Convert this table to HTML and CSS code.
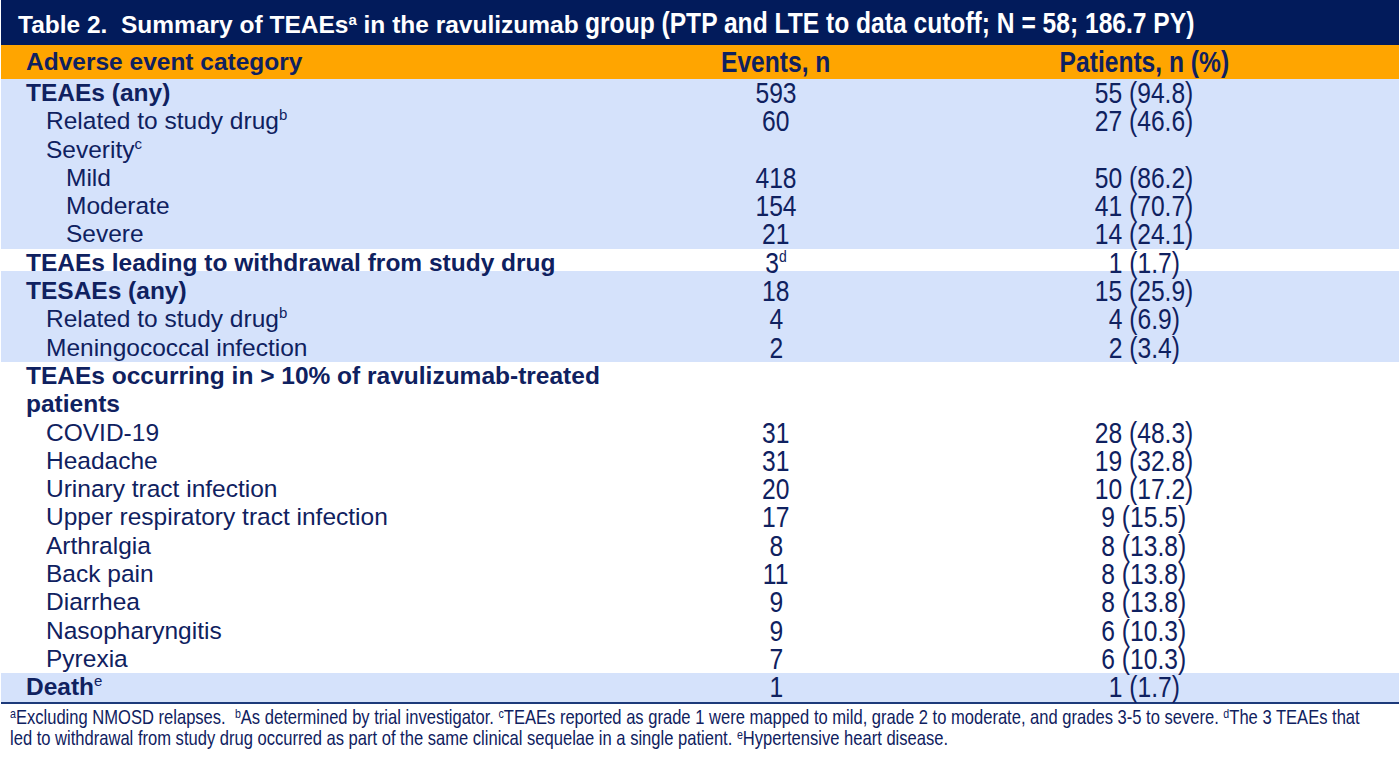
FILE: index.html
```html
<!DOCTYPE html>
<html>
<head>
<meta charset="utf-8">
<link rel="stylesheet" href="styles.css">
</head>
<body>
<div class="page">
  <div class="title">Table 2.&nbsp; Summary of TEAEs<sup>a</sup> in the ravulizumab <span class="tn">group (PTP and LTE to data cutoff; N = 58; 186.7 PY)</span></div>
  <div class="table">
    <div class="row head">
      <div class="label">Adverse event category</div>
      <div class="num"><span class="n">Events, n</span></div>
      <div class="num"><span class="n">Patients, n (%)</span></div>
    </div>
    <div class="row shade">
      <div class="label b">TEAEs (any)</div>
      <div class="num"><span class="n">593</span></div>
      <div class="num"><span class="n">55 (94.8)</span></div>
    </div>
    <div class="row shade">
      <div class="label l1">Related to study drug<sup>b</sup></div>
      <div class="num"><span class="n">60</span></div>
      <div class="num"><span class="n">27 (46.6)</span></div>
    </div>
    <div class="row shade">
      <div class="label l1">Severity<sup>c</sup></div>
      <div class="num"></div>
      <div class="num"></div>
    </div>
    <div class="row shade">
      <div class="label l2">Mild</div>
      <div class="num"><span class="n">418</span></div>
      <div class="num"><span class="n">50 (86.2)</span></div>
    </div>
    <div class="row shade">
      <div class="label l2">Moderate</div>
      <div class="num"><span class="n">154</span></div>
      <div class="num"><span class="n">41 (70.7)</span></div>
    </div>
    <div class="row shade">
      <div class="label l2">Severe</div>
      <div class="num"><span class="n">21</span></div>
      <div class="num"><span class="n">14 (24.1)</span></div>
    </div>
    <div class="row split">
      <div class="label b">TEAEs leading to withdrawal from study drug</div>
      <div class="num"><span class="n">3<sup>d</sup></span></div>
      <div class="num"><span class="n">1 (1.7)</span></div>
    </div>
    <div class="row shade">
      <div class="label b">TESAEs (any)</div>
      <div class="num"><span class="n">18</span></div>
      <div class="num"><span class="n">15 (25.9)</span></div>
    </div>
    <div class="row shade">
      <div class="label l1">Related to study drug<sup>b</sup></div>
      <div class="num"><span class="n">4</span></div>
      <div class="num"><span class="n">4 (6.9)</span></div>
    </div>
    <div class="row shade">
      <div class="label l1">Meningococcal infection</div>
      <div class="num"><span class="n">2</span></div>
      <div class="num"><span class="n">2 (3.4)</span></div>
    </div>
    <div class="row">
      <div class="label b">TEAEs occurring in &gt; 10% of ravulizumab-treated patients</div>
      <div class="num"></div>
      <div class="num"></div>
    </div>
    <div class="row">
      <div class="label l1">COVID-19</div>
      <div class="num"><span class="n">31</span></div>
      <div class="num"><span class="n">28 (48.3)</span></div>
    </div>
    <div class="row">
      <div class="label l1">Headache</div>
      <div class="num"><span class="n">31</span></div>
      <div class="num"><span class="n">19 (32.8)</span></div>
    </div>
    <div class="row">
      <div class="label l1">Urinary tract infection</div>
      <div class="num"><span class="n">20</span></div>
      <div class="num"><span class="n">10 (17.2)</span></div>
    </div>
    <div class="row">
      <div class="label l1">Upper respiratory tract infection</div>
      <div class="num"><span class="n">17</span></div>
      <div class="num"><span class="n">9 (15.5)</span></div>
    </div>
    <div class="row">
      <div class="label l1">Arthralgia</div>
      <div class="num"><span class="n">8</span></div>
      <div class="num"><span class="n">8 (13.8)</span></div>
    </div>
    <div class="row">
      <div class="label l1">Back pain</div>
      <div class="num"><span class="n">11</span></div>
      <div class="num"><span class="n">8 (13.8)</span></div>
    </div>
    <div class="row">
      <div class="label l1">Diarrhea</div>
      <div class="num"><span class="n">9</span></div>
      <div class="num"><span class="n">8 (13.8)</span></div>
    </div>
    <div class="row">
      <div class="label l1">Nasopharyngitis</div>
      <div class="num"><span class="n">9</span></div>
      <div class="num"><span class="n">6 (10.3)</span></div>
    </div>
    <div class="row">
      <div class="label l1">Pyrexia</div>
      <div class="num"><span class="n">7</span></div>
      <div class="num"><span class="n">6 (10.3)</span></div>
    </div>
    <div class="row shade">
      <div class="label b">Death<sup>e</sup></div>
      <div class="num"><span class="n">1</span></div>
      <div class="num"><span class="n">1 (1.7)</span></div>
    </div>
  </div>
  <div class="notes">
    <div class="notes-text"><sup>a</sup>Excluding NMOSD relapses.&nbsp; <sup>b</sup>As determined by trial investigator. <sup>c</sup>TEAEs reported as grade 1 were mapped to mild, grade 2 to moderate, and grades 3-5 to severe. <sup>d</sup>The 3 TEAEs that<br>led to withdrawal from study drug occurred as part of the same clinical sequelae in a single patient. <sup>e</sup>Hypertensive heart disease.</div>
  </div>
</div>
</body>
</html>
```

FILE: styles.css
```css
html, body {
  margin: 0;
  padding: 0;
  background: #ffffff;
}

.page {
  width: 1398px;
  margin: 0 1px;
  overflow: hidden;
  font-family: "Liberation Sans", Arial, sans-serif;
  color: #0f2160;
}

.title {
  height: 45px;
  background: #021b5b;
  color: #ffffff;
  font-weight: bold;
  font-size: 24.5px;
  line-height: 45px;
  padding-left: 17px;
  white-space: nowrap;
  overflow: hidden;
}

.title sup {
  font-size: 15px;
  vertical-align: 8px;
  line-height: 0;
}

.tn {
  display: inline-block;
  font-size: 30px;
  transform: scaleX(0.82);
  transform-origin: 0 50%;
}

.table {
  border-bottom: 2px solid #1d3a7a;
}

.row {
  display: grid;
  grid-template-columns: 640px 270px 466px;
  line-height: 28.3px;
  font-size: 24.5px;
}

.row.shade {
  background: #d5e2fb;
}

.row.split {
  background: linear-gradient(to bottom, #ffffff 0, #ffffff 22.3px, #d5e2fb 22.3px);
}

.row.head {
  background: #ffa500;
  line-height: 34px;
  font-weight: bold;
}

.label {
  padding-left: 25px;
}

.label.b {
  font-weight: bold;
}

.label.l1 {
  padding-left: 45px;
}

.label.l2 {
  padding-left: 65px;
}

.label sup {
  font-size: 15px;
  vertical-align: 9px;
  line-height: 0;
  font-weight: normal;
}

.num {
  text-align: center;
  font-size: 30px;
}

.n {
  display: inline-block;
  transform: scaleX(0.82);
  transform-origin: 50% 50%;
  white-space: nowrap;
}

.n sup {
  font-size: 17px;
  vertical-align: 11px;
  line-height: 0;
}

.notes {
  padding: 3px 0 0 9px;
  height: 52px;
  overflow: hidden;
}

.notes-text {
  width: 1700px;
  font-size: 20.2px;
  line-height: 21px;
  white-space: nowrap;
  transform: scaleX(0.82);
  transform-origin: 0 0;
}

.notes-text sup {
  font-size: 13px;
  vertical-align: 6px;
  line-height: 0;
}
```
